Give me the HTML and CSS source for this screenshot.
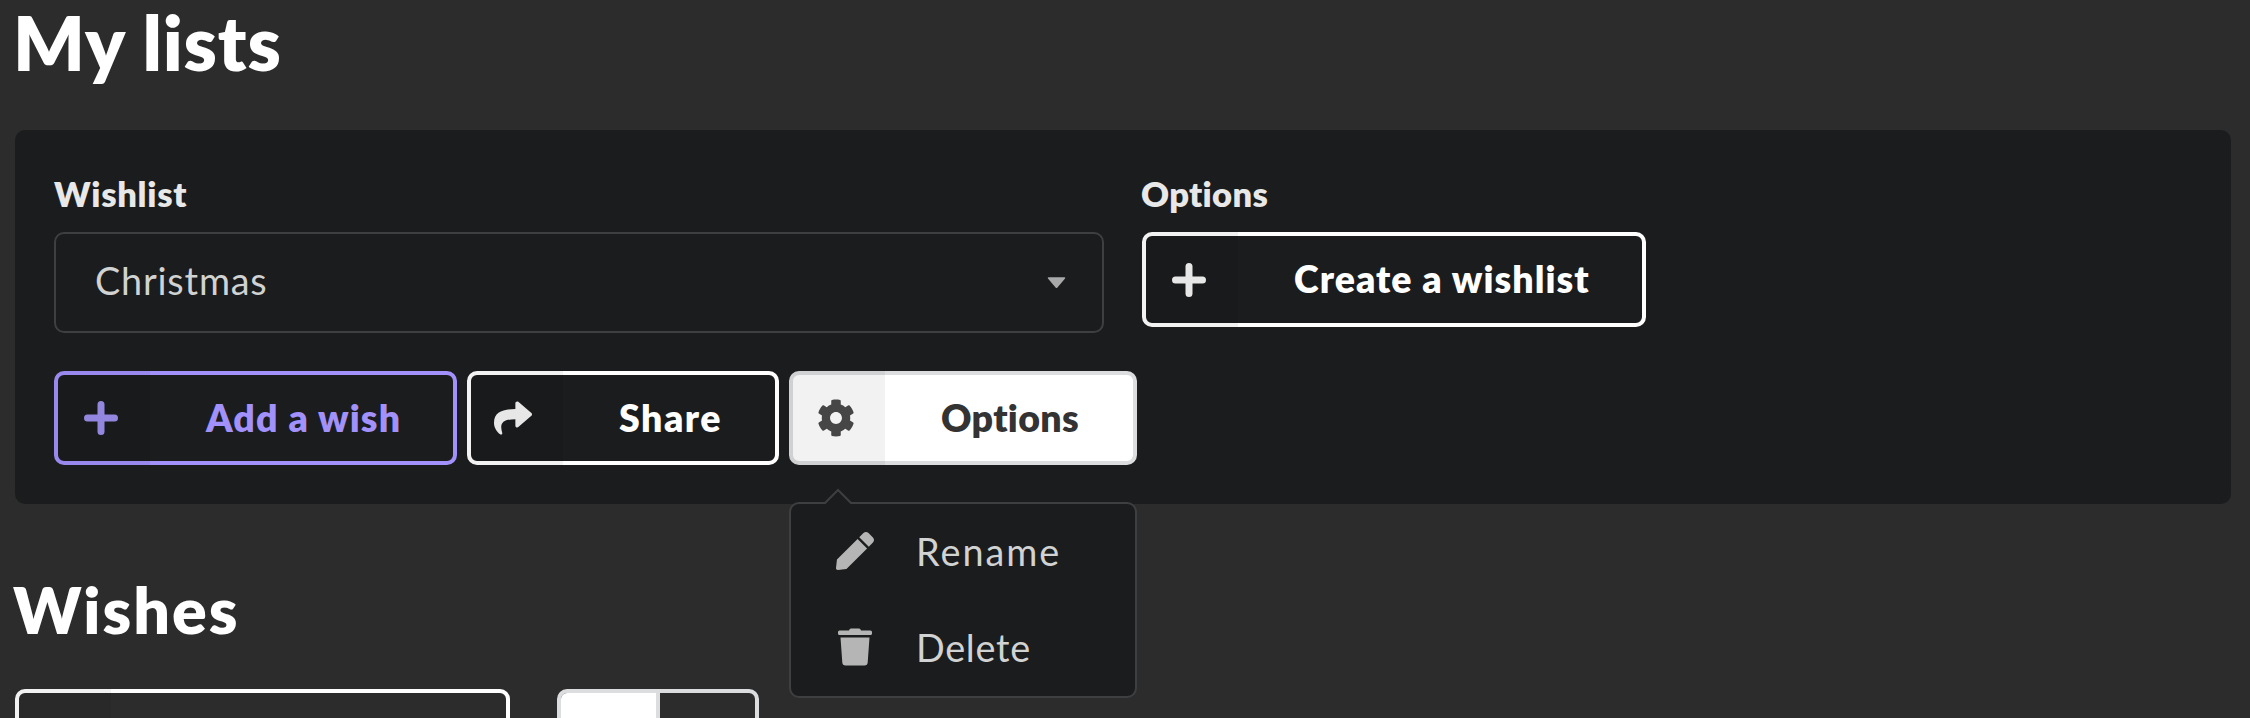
FILE: index.html
```
<!DOCTYPE html>
<html lang="en">
<head>
<meta charset="utf-8">
<title>My lists</title>
<link rel="stylesheet" href="styles.css">
</head>
<body>
<main class="page">
  <h1 class="title"><span>My lists</span></h1>
  <section class="card">
    <div class="fields">
      <div class="field">
        <label class="label label-wishlist">Wishlist</label>
        <div class="select">
          <span class="select-value">Christmas</span>
          <svg class="caret" viewBox="0 0 20 12"><path d="M2 0h16q2 0 .8 1.500L11 10.700q-1 1.200-2 0L1.200 1.500Q0 0 2 0z"/></svg>
        </div>
      </div>
      <div class="field">
        <label class="label label-options">Options</label>
        <button class="btn create"><span class="btn-icon"><svg class="icon" viewBox="0 0 34 34"><path class="plus" d="M17 3.500v27M3.500 17h27"/></svg></span><span class="btn-text">Create a wishlist</span></button>
      </div>
    </div>
    <div class="actions">
      <button class="btn primary add"><span class="btn-icon"><svg class="icon" viewBox="0 0 34 34"><path class="plus" d="M17 3.500v27M3.500 17h27"/></svg></span><span class="btn-text">Add a wish</span></button>
      <button class="btn share"><span class="btn-icon"><svg class="icon share-icon" viewBox="0 0 512 512"><path d="M503.691 189.836L327.687 37.851C312.281 24.546 288 35.347 288 56.015v80.053C127.371 137.907 0 170.100 0 322.326c0 61.441 39.581 122.309 83.333 154.132 13.653 9.931 33.111-2.533 28.077-18.631C66.066 312.814 132.917 274.316 288 272.085V360c0 20.700 24.300 31.453 39.687 18.164l176.004-152c11.071-9.562 11.086-26.753 0-36.328z"/></svg></span><span class="btn-text">Share</span></button>
      <div class="dropdown">
        <button class="btn filled options"><span class="btn-icon"><svg class="icon cog-icon" viewBox="0 0 512 512"><path d="M487.400 315.700l-42.600-24.600c4.300-23.200 4.300-47 0-70.200l42.600-24.600c4.900-2.800 7.100-8.600 5.500-14-11.100-35.600-30-67.800-54.700-94.600-3.800-4.100-10-5.100-14.800-2.300L380.800 110c-17.900-15.400-38.500-27.300-60.800-35.100V25.800c0-5.600-3.900-10.500-9.400-11.700-36.700-8.200-74.300-7.800-109.200 0-5.500 1.200-9.400 6.100-9.400 11.700V75c-22.200 7.900-42.800 19.800-60.800 35.100L88.700 85.500c-4.900-2.800-11-1.900-14.800 2.300-24.700 26.700-43.600 58.900-54.700 94.600-1.700 5.400.6 11.200 5.500 14L67.300 221c-4.300 23.200-4.300 47 0 70.200l-42.600 24.600c-4.900 2.800-7.100 8.600-5.500 14 11.100 35.600 30 67.800 54.700 94.600 3.800 4.100 10 5.100 14.800 2.300l42.600-24.600c17.900 15.400 38.500 27.300 60.800 35.100v49.200c0 5.600 3.900 10.500 9.400 11.700 36.700 8.200 74.300 7.800 109.200 0 5.500-1.200 9.400-6.100 9.400-11.700v-49.200c22.200-7.900 42.800-19.800 60.800-35.100l42.600 24.600c4.900 2.800 11 1.900 14.800-2.300 24.700-26.700 43.600-58.900 54.700-94.600 1.500-5.500-.7-11.300-5.600-14.100zM256 336c-44.100 0-80-35.900-80-80s35.900-80 80-80 80 35.900 80 80-35.900 80-80 80z"/></svg></span><span class="btn-text">Options</span></button>
        <div class="menu">
          <svg class="menu-arrow" viewBox="0 0 30 17"><path class="arrow-fill" d="M1 17L15 2.500 29 17z"/><path class="arrow-line" d="M1.500 15.500L15 2l13.500 13.500"/></svg>
          <div class="menu-item"><svg class="menu-icon pen" viewBox="0 0 512 512"><path d="M290.740 93.240l128.020 128.020-277.990 277.990-114.140 12.600C11.350 513.540-1.560 500.620.140 485.340l12.700-114.220 277.900-277.880zm207.200-19.060l-60.110-60.110c-18.750-18.750-49.160-18.750-67.910 0l-56.550 56.550 128.020 128.020 56.550-56.550c18.750-18.760 18.750-49.160 0-67.910z"/></svg><span class="rename">Rename</span></div>
          <div class="menu-item"><svg class="menu-icon trash" viewBox="0 0 38 38"><path d="M3.500 2.500H13Q13.500.5 15 .5h8q1.500 0 2 2h9.500q1.500 0 1.500 1.500v1.500q0 1.500-1.500 1.500h-31Q2 7 2 5.500V4q0-1.500 1.500-1.500zM4.500 9.500h29l-1.800 25q-.2 3-3.200 3h-19q-3 0-3.200-3z"/></svg><span class="delete">Delete</span></div>
        </div>
      </div>
    </div>
  </section>
  <h2 class="subtitle"><span>Wishes</span></h2>
  <div class="toolbar">
    <div class="btn toolbar-btn"><span class="btn-icon"></span></div>
    <div class="toggle"><span class="toggle-on"></span><span class="toggle-off"></span></div>
  </div>
</main>
</body>
</html>
```
FILE: styles.css
```
* { box-sizing: border-box; }
html, body { height: 100%; }
body {
  margin: 0;
  overflow: hidden;
  background: #2c2c2c;
  color: #fff;
  font-family: Lato, "Open Sans", sans-serif;
}
.page { padding: 0 19px 0 15px; }
.title {
  margin: 0 0 0 -2px;
  height: 130px;
  font-size: 75px;
  line-height: 85px;
  font-weight: 800;
  letter-spacing: .8px;
  white-space: nowrap;
}
.card {
  height: 374px;
  padding: 39px 39px 0;
  border-radius: 10px;
  background: #1b1c1d;
}
.fields { display: flex; gap: 38px; height: 202px; }
.field { display: flex; flex-direction: column; align-items: flex-start; }
.label {
  height: 63px;
  line-height: 50px;
  font-size: 34.500px;
  font-weight: 800;
  color: #e8e8e8;
  white-space: nowrap;
}
.label-wishlist { letter-spacing: .7px; }
.label-options { letter-spacing: .3px; margin-left: -1px; }
.select {
  display: flex;
  align-items: center;
  justify-content: space-between;
  width: 1050px;
  height: 101px;
  padding: 0 36px 4px 39px;
  border: 2px solid #3e3f40;
  border-radius: 10px;
  font-size: 37.800px;
  letter-spacing: .8px;
  color: #d1d2d2;
}
.caret { width: 19px; height: 12px; margin-top: 4px; fill: #a9a9aa; }
.btn {
  display: flex;
  align-items: stretch;
  height: 94px;
  padding: 0;
  border: 4px solid #fff;
  border-radius: 10px;
  background: transparent;
  color: #fff;
  font-family: inherit;
  font-size: 37.500px;
  font-weight: 800;
  white-space: nowrap;
}
.btn-icon {
  display: flex;
  align-items: center;
  justify-content: center;
  flex: none;
  width: 92px;
  padding-right: 6px;
  color: #f4f4f4;
  position: relative;
}
/* Shade over the icon section, including the button border */
.btn-icon::after {
  content: "";
  position: absolute;
  inset: -4px 0 -4px -4px;
  border-radius: 10px 0 0 10px;
  background: rgba(0, 0, 0, .05);
}
.btn-text { flex: 1; text-align: left; line-height: 86px; padding-left: 56px; }
.icon { width: 34px; height: 34px; fill: currentColor; }
.plus { fill: none; stroke: currentColor; stroke-width: 7; stroke-linecap: round; }
.create { width: 504px; height: 95px; letter-spacing: 1.050px; }
.add { width: 403px; letter-spacing: 1.100px; }
.share { width: 312px; letter-spacing: 1.500px; }
.options { width: 348px; letter-spacing: .3px; }
.primary { color: #a291fb; border-color: #a291fb; }
.primary .btn-icon { color: #9b8eea; }
.filled { background: #fff; color: #333; border-color: #dcddde; }
.filled .btn-icon { color: #4a4a4a; }
.share-icon { width: 38px; height: 38px; }
.share .btn-icon { padding-right: 8px; }
.cog-icon { width: 38px; height: 38px; }
.actions { display: flex; gap: 10px; }
.dropdown { position: relative; }
.menu {
  position: absolute;
  top: 131px;
  left: 0;
  width: 348px;
  height: 196px;
  border: 2px solid #3e3f40;
  border-radius: 10px;
  background: #1b1c1d;
  color: #d1d2d2;
  font-size: 37.800px;
}
.menu-arrow { position: absolute; left: 32px; top: -16px; width: 30px; height: 17px; }
.arrow-fill { fill: #1b1c1d; }
.arrow-line { fill: none; stroke: #3e3f40; stroke-width: 2; }
.menu-item { display: flex; align-items: center; height: 96px; padding: 0 0 2px 45px; }
.menu-item span { margin-left: 42px; }
.menu-icon { width: 38px; height: 38px; fill: #b5b5b5; }
.rename { letter-spacing: 2px; }
.delete { letter-spacing: .7px; }
.subtitle {
  margin: 0 0 0 -2px;
  height: 185px;
  padding-top: 64px;
  font-size: 64.500px;
  line-height: 83px;
  font-weight: 800;
  letter-spacing: 2px;
}
.toolbar { display: flex; gap: 47px; }
.toolbar-btn { width: 495px; }
.toggle {
  display: flex;
  width: 202px;
  height: 94px;
  border: 4px solid #dcddde;
  border-radius: 10px;
  overflow: hidden;
}
.toggle-on { width: 99px; background: #fff; border-right: 4px solid #dcddde; }
.toggle-off { flex: 1; }
```
